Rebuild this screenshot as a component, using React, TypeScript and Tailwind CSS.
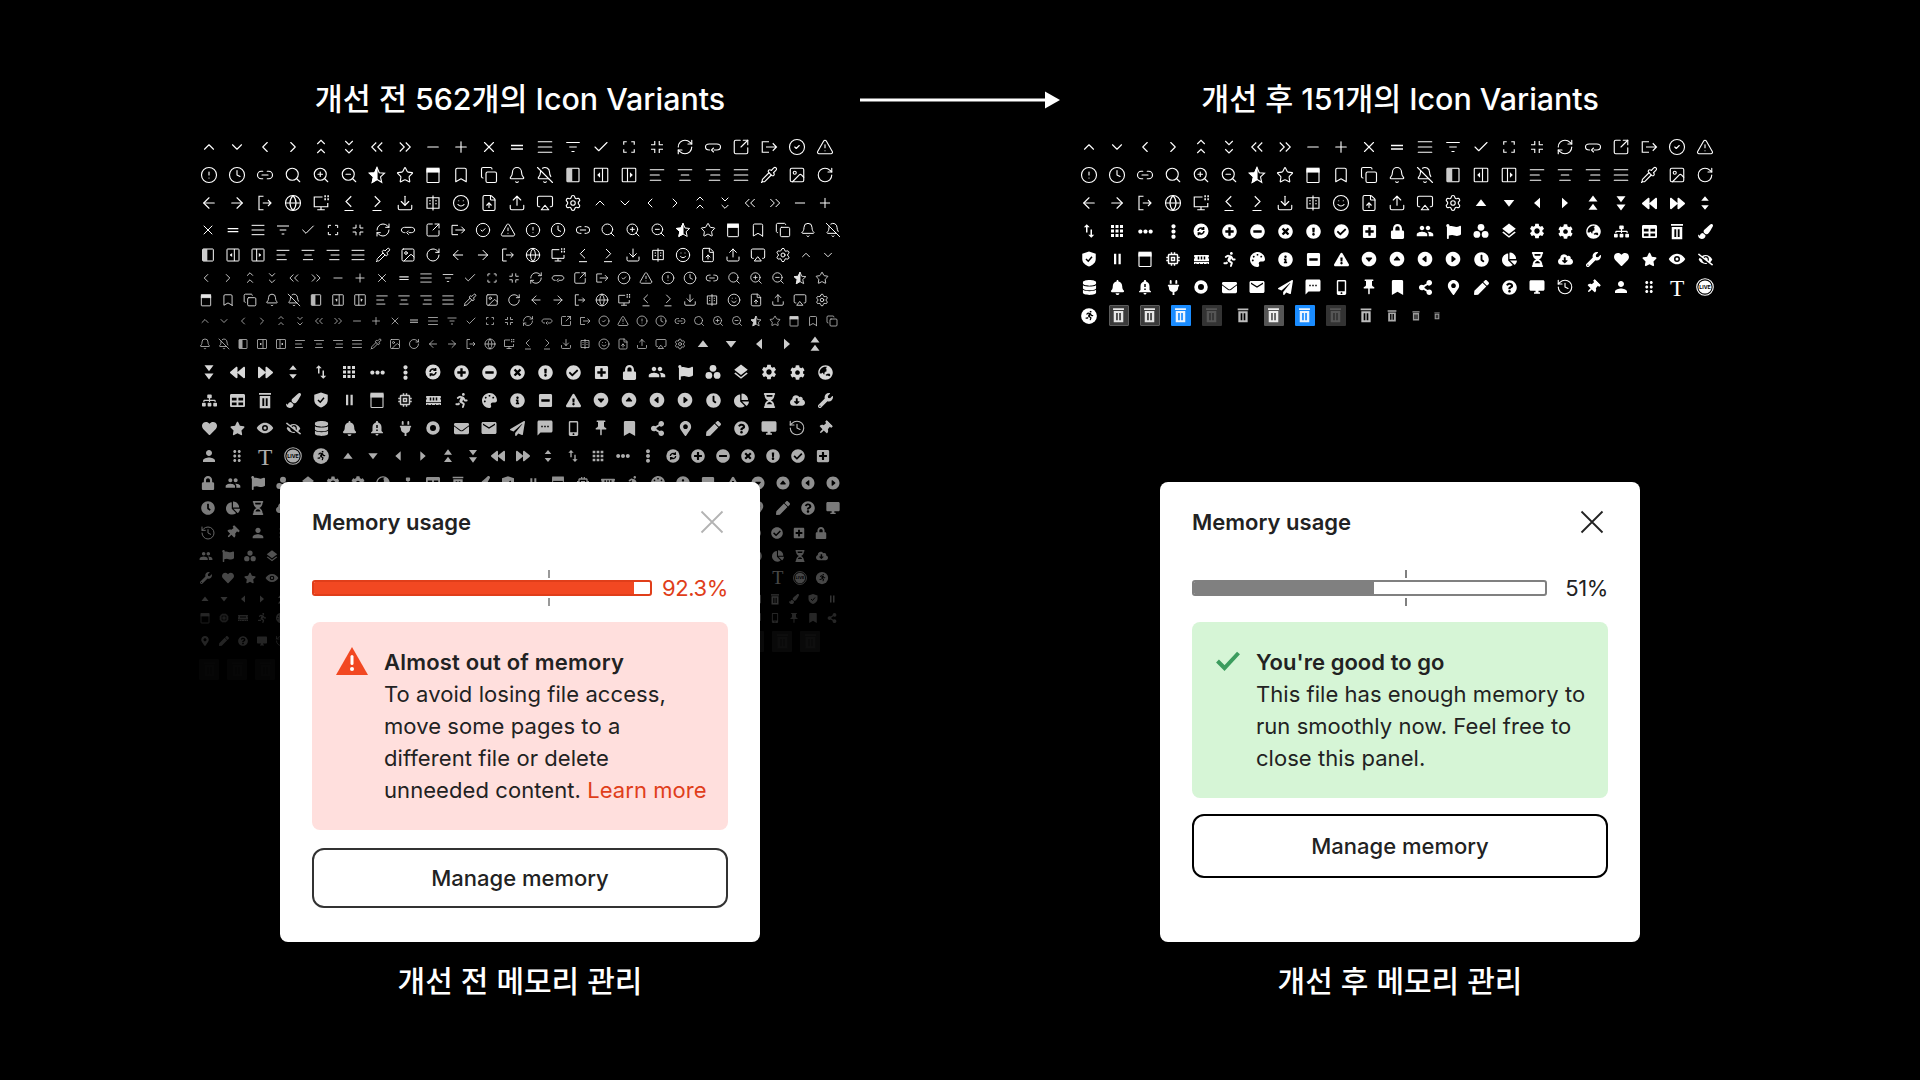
import React from "react";
import {
  ChevronUp, ChevronDown, ChevronLeft, ChevronRight, Minus, Plus, X, AlignJustify,
  Check, RefreshCw, SquareArrowOutUpRight, CircleCheck, TriangleAlert, CircleAlert, Clock, Link2,
  Search, ZoomIn, ZoomOut, Star, Bookmark, Copy, Bell, BellOff, AlignLeft, AlignCenter, AlignRight, Pipette, Image,
  RotateCw, ArrowLeft, ArrowRight, Globe, Download, Smile, FileUp, Upload, Airplay, Settings, History,
} from "lucide-react";
import {
  FaBackward, FaForward, FaEllipsisH, FaEllipsisV, FaPlusCircle, FaMinusCircle, FaTimesCircle, FaExclamationCircle,
  FaCheckCircle, FaPlusSquare, FaLock, FaFlag, FaCog, FaGlobeAsia, FaSitemap, FaTable, FaPaintBrush,
  FaMemory, FaRunning, FaPalette, FaInfoCircle, FaMinusSquare, FaExclamationTriangle, FaClock, FaChartPie,
  FaHourglassHalf, FaCloudDownloadAlt, FaWrench, FaHeart, FaStar, FaEyeSlash, FaDatabase, FaBell, FaPlug,
  FaEnvelope, FaMobileAlt, FaThumbtack, FaBookmark, FaShareAlt, FaMapMarkerAlt, FaPen, FaQuestionCircle, FaPaperPlane,
} from "react-icons/fa";
import {
  MdSwapVert, MdApps, MdPeople, MdLayers, MdSettings, MdNotificationImportant, MdSms, MdPushPin, MdPerson,
  MdDragIndicator, MdDesktopWindows, MdEmail, MdMemory,
} from "react-icons/md";
import { IoCaretDownCircle, IoCaretUpCircle, IoCaretBackCircle, IoCaretForwardCircle } from "react-icons/io5";

type IconFn = (s: number) => React.ReactNode;

const L = (C: React.ComponentType<any>): IconFn => (s) => <C size={s} strokeWidth={1.5} />;
const F = (C: React.ComponentType<any>): IconFn => (s) => <C size={Math.round(s * 0.86)} />;
const M = (C: React.ComponentType<any>): IconFn => (s) => <C size={s} />;
const SO = (body: React.ReactNode): IconFn => (s) => (
  <svg width={s} height={s} viewBox="0 0 24 24" fill="none" stroke="currentColor" strokeWidth={1.5} strokeLinejoin="miter">
    {body}
  </svg>
);
const SF = (body: React.ReactNode): IconFn => (s) => (
  <svg width={s} height={s} viewBox="0 0 24 24" fill="currentColor">
    {body}
  </svg>
);

const calendar = SO(<><rect x="4" y="4" width="16" height="18" rx="1" /><rect x="4" y="3" width="16" height="5" fill="currentColor" /></>);

const outline: IconFn[] = [
  L(ChevronUp), L(ChevronDown), L(ChevronLeft), L(ChevronRight),
  SO(<path d="M7 8l5-5 5 5M7 20l5-5 5 5" />), SO(<path d="M7 4l5 5 5-5M7 15l5 5 5-5" />),
  SO(<path d="M11 6l-6 6 6 6M19 6l-6 6 6 6" />), SO(<path d="M5 6l6 6-6 6M13 6l6 6-6 6" />),
  L(Minus), L(Plus), L(X), SF(<path d="M4 9h16v2H4zM4 13.500h16v2H4z" />), L(AlignJustify),
  SO(<path d="M3 6h18M7 12h10M10 18h4" />), L(Check),
  SO(<path d="M5 9V5h4M15 5h4v4M19 15v4h-4M9 19H5v-4" />),
  SO(<path d="M9 4v5H4M15 4v5h5M9 20v-5H4M15 20v-5h5" />), L(RefreshCw),
  SO(<path d="M8 16H7c-3 0-5-2-5-4s2-4 5-4h10c3 0 5 2 5 4s-2 4-5 4h-4M13 13l-3 3 3 3" />), L(SquareArrowOutUpRight),
  SO(<path d="M12 5H3v14h9M8 12h14M17 7l5 5-5 5" />), L(CircleCheck), L(TriangleAlert),
  L(CircleAlert), L(Clock), L(Link2), L(Search), L(ZoomIn), L(ZoomOut),
  SO(<><path d="M12 2l3 7 7 .7-5.300 4.800 1.600 7.200L12 18l-6.300 3.700 1.600-7.200L2 9.700 9 9z" /><path d="M12 2v16l-6.300 3.700 1.600-7.200L2 9.700 9 9z" fill="currentColor" /></>),
  L(Star), calendar, L(Bookmark), L(Copy), L(Bell), L(BellOff),
  SO(<><rect x="4" y="3" width="16" height="18" rx="1" /><rect x="4" y="3" width="7" height="18" fill="#ccc" stroke="none" /></>),
  SO(<><rect x="3" y="3" width="18" height="18" rx="1" /><path d="M14 3v18" /><path d="M10 10v4l-2-2z" fill="currentColor" /></>),
  SO(<><rect x="3" y="3" width="18" height="18" rx="1" /><path d="M10 3v18" /><path d="M14 10v4l2-2z" fill="currentColor" /></>),
  L(AlignLeft), L(AlignCenter), L(AlignRight), L(AlignJustify), L(Pipette), L(Image), L(RotateCw),
  L(ArrowLeft), L(ArrowRight),
  SO(<path d="M10 3H4v18h6M9 12h11M16 8l4 4-4 4" />), L(Globe),
  SO(<><path d="M14 4H3v13h18v-5M12 17v4M7 21h10" /><path d="M16.500 3h2M20.500 3h2M16.500 7h2M20.500 7h2" strokeWidth="2.500" /></>),
  SO(<path d="M15 3l-7 7 7 7M6 22h12" />), SO(<path d="M9 3l7 7-7 7M6 22h12" />),
  L(Download),
  SO(<><path d="M12 2v20M4 5h16v14H4zM7 9h2M7 13h2M15 9h2M15 13h2" /></>),
  L(Smile), L(FileUp), L(Upload), L(Airplay), L(Settings),
];

const triUp = SF(<polygon points="12,7 19,16 5,16" />);
const triDown = SF(<polygon points="12,17 19,8 5,8" />);
const triLeft = SF(<polygon points="8,12 16,5 16,19" />);
const triRight = SF(<polygon points="16,12 8,5 8,19" />);
const trashPath = <path d="M4 2.500h16v2.500H4zM5 6.500h14V23H5zM8.500 9.500v10.500h2.500V9.500zM13 9.500v10.500h2.500V9.500z" fillRule="evenodd" />;

const solid: IconFn[] = [
  triUp, triDown, triLeft, triRight,
  SF(<path d="M12 2l6 8H6zM12 13l6 8H6z" />), SF(<path d="M12 11l6-8H6zM12 22l6-8H6z" />),
  F(FaBackward), F(FaForward),
  SF(<path d="M12 3l5 6H7zM12 21l5-6H7z" />), M(MdSwapVert), M(MdApps), F(FaEllipsisH), F(FaEllipsisV),
  SF(<><circle cx="12" cy="12" r="10" /><path d="M8 12a4 4 0 0 1 7-2.600M16 12a4 4 0 0 1-7 2.600M15.500 6.500v3h-3M8.500 17.500v-3h3" fill="none" stroke="#000" strokeWidth="2" /></>),
  F(FaPlusCircle), F(FaMinusCircle), F(FaTimesCircle), F(FaExclamationCircle), F(FaCheckCircle), F(FaPlusSquare), F(FaLock),
  M(MdPeople), F(FaFlag),
  SF(<><circle cx="12" cy="7" r="4.500" /><circle cx="6.500" cy="16.500" r="4.500" /><circle cx="17.500" cy="16.500" r="4.500" /></>),
  M(MdLayers), M(MdSettings), F(FaCog), F(FaGlobeAsia),
  F(FaSitemap), F(FaTable), SF(trashPath), F(FaPaintBrush),
  SF(<><path d="M12 2l9 3v7c0 5-4 8-9 10-5-2-9-5-9-10V5z" /><path d="M8 12l3 3 5-6" fill="none" stroke="#000" strokeWidth="2" /></>),
  SF(<path d="M8 5h3v14H8zM14 5h3v14h-3z" />), calendar, M(MdMemory), F(FaMemory), F(FaRunning), F(FaPalette), F(FaInfoCircle), F(FaMinusSquare), F(FaExclamationTriangle),
  M(IoCaretDownCircle), M(IoCaretUpCircle), M(IoCaretBackCircle), M(IoCaretForwardCircle),
  F(FaClock), F(FaChartPie), F(FaHourglassHalf), F(FaCloudDownloadAlt), F(FaWrench), F(FaHeart), F(FaStar),
  SF(<path d="M12 5c5 0 9 3.500 11 7-2 3.500-6 7-11 7S3 15.500 1 12c2-3.500 6-7 11-7zm0 3a4 4 0 1 0 0 8 4 4 0 0 0 0-8zm0 2a2 2 0 1 1 0 4 2 2 0 0 1 0-4z" fillRule="evenodd" />),
  F(FaEyeSlash),
  F(FaDatabase), F(FaBell), M(MdNotificationImportant), F(FaPlug),
  SF(<path d="M12 3a9 9 0 1 0 0 18 9 9 0 0 0 0-18zm0 5a4 4 0 1 1 0 8 4 4 0 0 1 0-8z" fillRule="evenodd" />),
  F(FaEnvelope), M(MdEmail), F(FaPaperPlane), M(MdSms), F(FaMobileAlt),
  M(MdPushPin), F(FaBookmark), F(FaShareAlt), F(FaMapMarkerAlt), F(FaPen), F(FaQuestionCircle), M(MdDesktopWindows),
  L(History),
  (s) => <FaThumbtack size={Math.round(s * 0.8)} className="rotate-45" />,
  M(MdPerson), M(MdDragIndicator),
  (s) => (
    <svg width={s * 1.25} height={s * 1.25} viewBox="0 0 24 24" fill="currentColor">
      <text x="12" y="21" textAnchor="middle" fontSize="25" fontFamily="'Liberation Serif',serif">T</text>
    </svg>
  ),
  (s) => (
    <svg width={s} height={s} viewBox="0 0 24 24" fill="currentColor">
      <circle cx="12" cy="12" r="11" fill="none" stroke="currentColor" strokeWidth="1.500" />
      <circle cx="12" cy="12" r="8.800" />
      <text x="12" y="14.500" textAnchor="middle" fontSize="7" fontWeight="700" fill="#000" fontFamily="Inter,sans-serif">LIVE</text>
    </svg>
  ),
  (s) => (
    <svg width={s} height={s} viewBox="0 0 24 24" fill="currentColor">
      <circle cx="12" cy="12" r="10.500" />
      <FaRunning x="6" y="5" size={13} color="#000" />
    </svg>
  ),
];

type Pitch = 31 | 30 | 28 | 26 | 25 | 22 | 19 | 15;
const cellW: Record<Pitch, string> = {
  31: "w-[31px]", 30: "w-[30px]", 28: "w-[28px]", 26: "w-[26px]", 25: "w-[25px]", 22: "w-[22px]", 19: "w-[19px]", 15: "w-[15px]",
};
const iconSize: Partial<Record<Pitch, number>> = { 28: 18, 25: 16, 22: 14, 19: 12 };

type Seg = { p: Pitch; items: IconFn[] };
type Row = { h: string; op: string; segs: Seg[] };

const seg = (p: Pitch, arr: IconFn[], a: number, b: number): Seg => ({ p, items: arr.slice(a, b) });

const TrashBox = ({ box, trash }: { box: string; trash: string }) => (
  <div className={`flex h-[21px] w-[20px] items-center justify-center rounded-[1px] ${box}`}>
    <svg width="13" height="15" viewBox="3 2 18 22" fill="currentColor" className={trash}>{trashPath}</svg>
  </div>
);
const Trash = ({ w, h, cls }: { w: number; h: number; cls: string }) => (
  <svg width={w} height={h} viewBox="3 2 18 22" fill="currentColor" className={cls}>{trashPath}</svg>
);

const tb = (box: string, trash: string): IconFn => () => <TrashBox box={box} trash={trash} />;
const boxA = tb("bg-[#3a3a3a] border border-[#5c5c5c]", "text-[#e6e6e6]");
const boxB = tb("bg-[#1a8cff]", "text-[#eaf4ff]");
const boxC = tb("bg-[#333]", "text-[#555]");
const boxD = tb("bg-[#555]", "text-[#eee]");
const boxF = tb("bg-[#444]", "text-[#666]");
const plain = (w: number, h: number, cls: string): IconFn => () => <Trash w={w} h={h} cls={cls} />;

const leftRows: Row[] = [
  { h: "h-[28px]", op: "opacity-100", segs: [seg(28, outline, 0, 23)] },
  { h: "h-[28px]", op: "opacity-100", segs: [seg(28, outline, 23, 46)] },
  { h: "h-[28px]", op: "opacity-100", segs: [seg(28, outline, 46, 60), seg(25, outline, 0, 10)] },
  { h: "h-[25px]", op: "opacity-100", segs: [seg(25, outline, 10, 36)] },
  { h: "h-[25px]", op: "opacity-100", segs: [seg(25, outline, 36, 60), seg(22, outline, 0, 2)] },
  { h: "h-[22px]", op: "opacity-90", segs: [seg(22, outline, 2, 31)] },
  { h: "h-[22px]", op: "opacity-90", segs: [seg(22, outline, 31, 60)] },
  { h: "h-[19px]", op: "opacity-80", segs: [seg(19, outline, 0, 34)] },
  { h: "h-[28px]", op: "opacity-80", segs: [seg(19, outline, 34, 60), seg(28, solid, 0, 5)] },
  { h: "h-[28px]", op: "opacity-[0.85]", segs: [seg(28, solid, 5, 28)] },
  { h: "h-[28px]", op: "opacity-[0.8]", segs: [seg(28, solid, 28, 51)] },
  { h: "h-[28px]", op: "opacity-[0.74]", segs: [seg(28, solid, 51, 74)] },
  { h: "h-[28px]", op: "opacity-[0.68]", segs: [seg(28, solid, 74, 79), seg(25, solid, 0, 20)] },
  { h: "h-[25px]", op: "opacity-[0.56]", segs: [seg(25, solid, 20, 46)] },
  { h: "h-[25px]", op: "opacity-[0.48]", segs: [seg(25, solid, 46, 72)] },
  { h: "h-[25px]", op: "opacity-[0.4]", segs: [seg(25, solid, 72, 79), seg(22, solid, 0, 21)] },
  { h: "h-[22px]", op: "opacity-[0.32]", segs: [seg(22, solid, 21, 50)] },
  { h: "h-[22px]", op: "opacity-[0.28]", segs: [seg(22, solid, 50, 79)] },
  { h: "h-[19px]", op: "opacity-[0.2]", segs: [seg(19, solid, 0, 34)] },
  { h: "h-[19px]", op: "opacity-[0.15]", segs: [seg(19, solid, 34, 68)] },
  { h: "h-[28px]", op: "opacity-[0.14]", segs: [seg(19, solid, 68, 79), { p: 28, items: Array(15).fill(boxF) }] },
  { h: "h-[28px]", op: "opacity-[0.07]", segs: [{ p: 28, items: Array(4).fill(boxF) }] },
];

const rightRows: Row[] = [
  { h: "h-[28px]", op: "opacity-100", segs: [seg(28, outline, 0, 23)] },
  { h: "h-[28px]", op: "opacity-100", segs: [seg(28, outline, 23, 46)] },
  { h: "h-[28px]", op: "opacity-100", segs: [seg(28, outline, 46, 60), seg(28, solid, 0, 9)] },
  { h: "h-[28px]", op: "opacity-100", segs: [seg(28, solid, 9, 32)] },
  { h: "h-[28px]", op: "opacity-100", segs: [seg(28, solid, 32, 55)] },
  { h: "h-[28px]", op: "opacity-100", segs: [seg(28, solid, 55, 78)] },
  {
    h: "h-[29px]",
    op: "opacity-100",
    segs: [
      seg(28, solid, 78, 79),
      { p: 31, items: [boxA, boxA, boxB, boxC, plain(12, 15, "text-[#bbb]"), boxD, boxB, boxC] },
      { p: 30, items: [plain(12, 15, "text-[#bbb]")] },
      { p: 22, items: [plain(10, 12, "text-[#aaa]")] },
      { p: 26, items: [plain(8, 10, "text-[#999]")] },
      { p: 15, items: [plain(6, 8, "text-[#999]")] },
    ],
  },
];

const IconGrid = ({ rows }: { rows: Row[] }) => (
  <div className="mt-[14px] h-[349px] text-white">
    {rows.map((r, i) => (
      <div key={i} className={`flex items-center ${r.h} ${r.op}`}>
        {r.segs.map((s) =>
          s.items.map((Ic, j) => (
            <div key={`${s.p}-${j}`} className={`flex shrink-0 items-center justify-center ${cellW[s.p]}`}>
              {Ic(iconSize[s.p] ?? 18)}
            </div>
          )),
        )}
      </div>
    ))}
  </div>
);

const Card = ({ before }: { before: boolean }) => (
  <div className="relative z-10 mx-auto h-[460px] w-[480px] rounded-[8px] bg-white px-[32px] pt-[24px] text-[22px] leading-[32px] text-[#222]">
    <div className="flex items-center justify-between">
      <div className="h-[32px] text-[22px] font-semibold">Memory usage</div>
      <svg width="24" height="24" viewBox="0 0 24 24" className={`mr-[4px] ${before ? "text-[#b3b3b3]" : "text-[#222]"}`} stroke="currentColor" strokeWidth="1.800" fill="none">
        <path d="M1.500 1.500l21 21M22.500 1.500l-21 21" />
      </svg>
    </div>
    <div className="relative mt-[42px] flex h-[16px] items-center">
      {before ? (
        <>
          <div className="h-[16px] w-[340px] overflow-hidden rounded-[3px] border-2 border-[#e03e1a] bg-white">
            <div className="h-full w-[320px] bg-[#f24822]" />
          </div>
          <div className="ml-auto tracking-[-0.4px] text-[#e03e1a]">92.3%</div>
          <div className="absolute left-[236px] top-[-10px] h-[8px] w-[2px] bg-[#999]" />
          <div className="absolute left-[236px] top-[18px] h-[8px] w-[2px] bg-[#999]" />
        </>
      ) : (
        <>
          <div className="h-[16px] w-[355px] overflow-hidden rounded-[3px] border-2 border-[#808080] bg-white">
            <div className="h-full w-[180px] bg-[#808080]" />
          </div>
          <div className="ml-auto tracking-[-0.4px] text-[#222]">51%</div>
          <div className="absolute left-[213px] top-[-10px] h-[8px] w-[2px] bg-[#808080]" />
          <div className="absolute left-[213px] top-[18px] h-[8px] w-[2px] bg-[#808080]" />
        </>
      )}
    </div>
    {before ? (
      <div className="mt-[26px] flex h-[208px] rounded-[8px] bg-[#ffdfdd] pl-[24px] pr-[14px] pt-[24px] tracking-[0.07px]">
        <svg width="32" height="28" viewBox="0 0 32 28" className="mr-[16px] mt-[1px] shrink-0">
          <path d="M16 0L32 28H0z" fill="#f24822" />
          <rect x="14.500" y="8" width="3" height="10" rx="1.500" fill="#fff" />
          <circle cx="16" cy="22" r="2" fill="#fff" />
        </svg>
        <div>
          <div className="font-semibold tracking-[0.2px]">Almost out of memory</div>
          <div>
            To avoid losing file access,
            <br />
            move some pages to a
            <br />
            different file or delete
            <br />
            unneeded content. <span className="text-[#e03e1a]">Learn more</span>
          </div>
        </div>
      </div>
    ) : (
      <div className="mt-[26px] flex h-[176px] rounded-[8px] bg-[#d6f5d6] pl-[24px] pr-[12px] pt-[24px] tracking-[0.04px]">
        <svg width="24" height="20" viewBox="0 0 24 20" className="mr-[16px] mt-[5px] shrink-0" fill="none" stroke="#3c9c5e" strokeWidth="4">
          <path d="M1.500 10l7 7L22.500 2" />
        </svg>
        <div>
          <div className="font-semibold">You're good to go</div>
          <div>This file has enough memory to run smoothly now. Feel free to close this panel.</div>
        </div>
      </div>
    )}
    <div
      className={`flex items-center justify-center rounded-[12px] border-2 font-medium ${
        before ? "mt-[18px] h-[60px] border-[#333]" : "mt-[16px] h-[64px] border-black"
      }`}
    >
      Manage memory
    </div>
  </div>
);

const Column = ({ title, caption, rows, before }: { title: string; caption: string; rows: Row[]; before: boolean }) => (
  <div className="flex w-[650px] shrink-0 flex-col">
    <div className="h-[40px] text-center text-[30.4px] font-medium leading-[40px] text-white">{title}</div>
    <IconGrid rows={rows} />
    <Card before={before} />
    <div className="mt-[18px] h-[40px] text-center text-[30px] font-medium leading-[42px] text-white">{caption}</div>
  </div>
);

export default function App() {
  return (
    <div className="flex h-[1080px] w-[1920px] overflow-hidden bg-black pl-[195px] pt-[79px] font-[Inter,'Noto_Sans_CJK_KR',sans-serif]">
      <Column title="개선 전 562개의 Icon Variants" caption="개선 전 메모리 관리" rows={leftRows} before />
      <div className="flex h-[42px] w-[230px] shrink-0 items-center justify-center">
        <svg width="200" height="18" viewBox="0 0 200 18" fill="#fff">
          <rect x="0" y="7.500" width="186" height="3" />
          <path d="M185 .500l15 8.500-15 8.500z" />
        </svg>
      </div>
      <Column title="개선 후 151개의 Icon Variants" caption="개선 후 메모리 관리" rows={rightRows} before={false} />
    </div>
  );
}
